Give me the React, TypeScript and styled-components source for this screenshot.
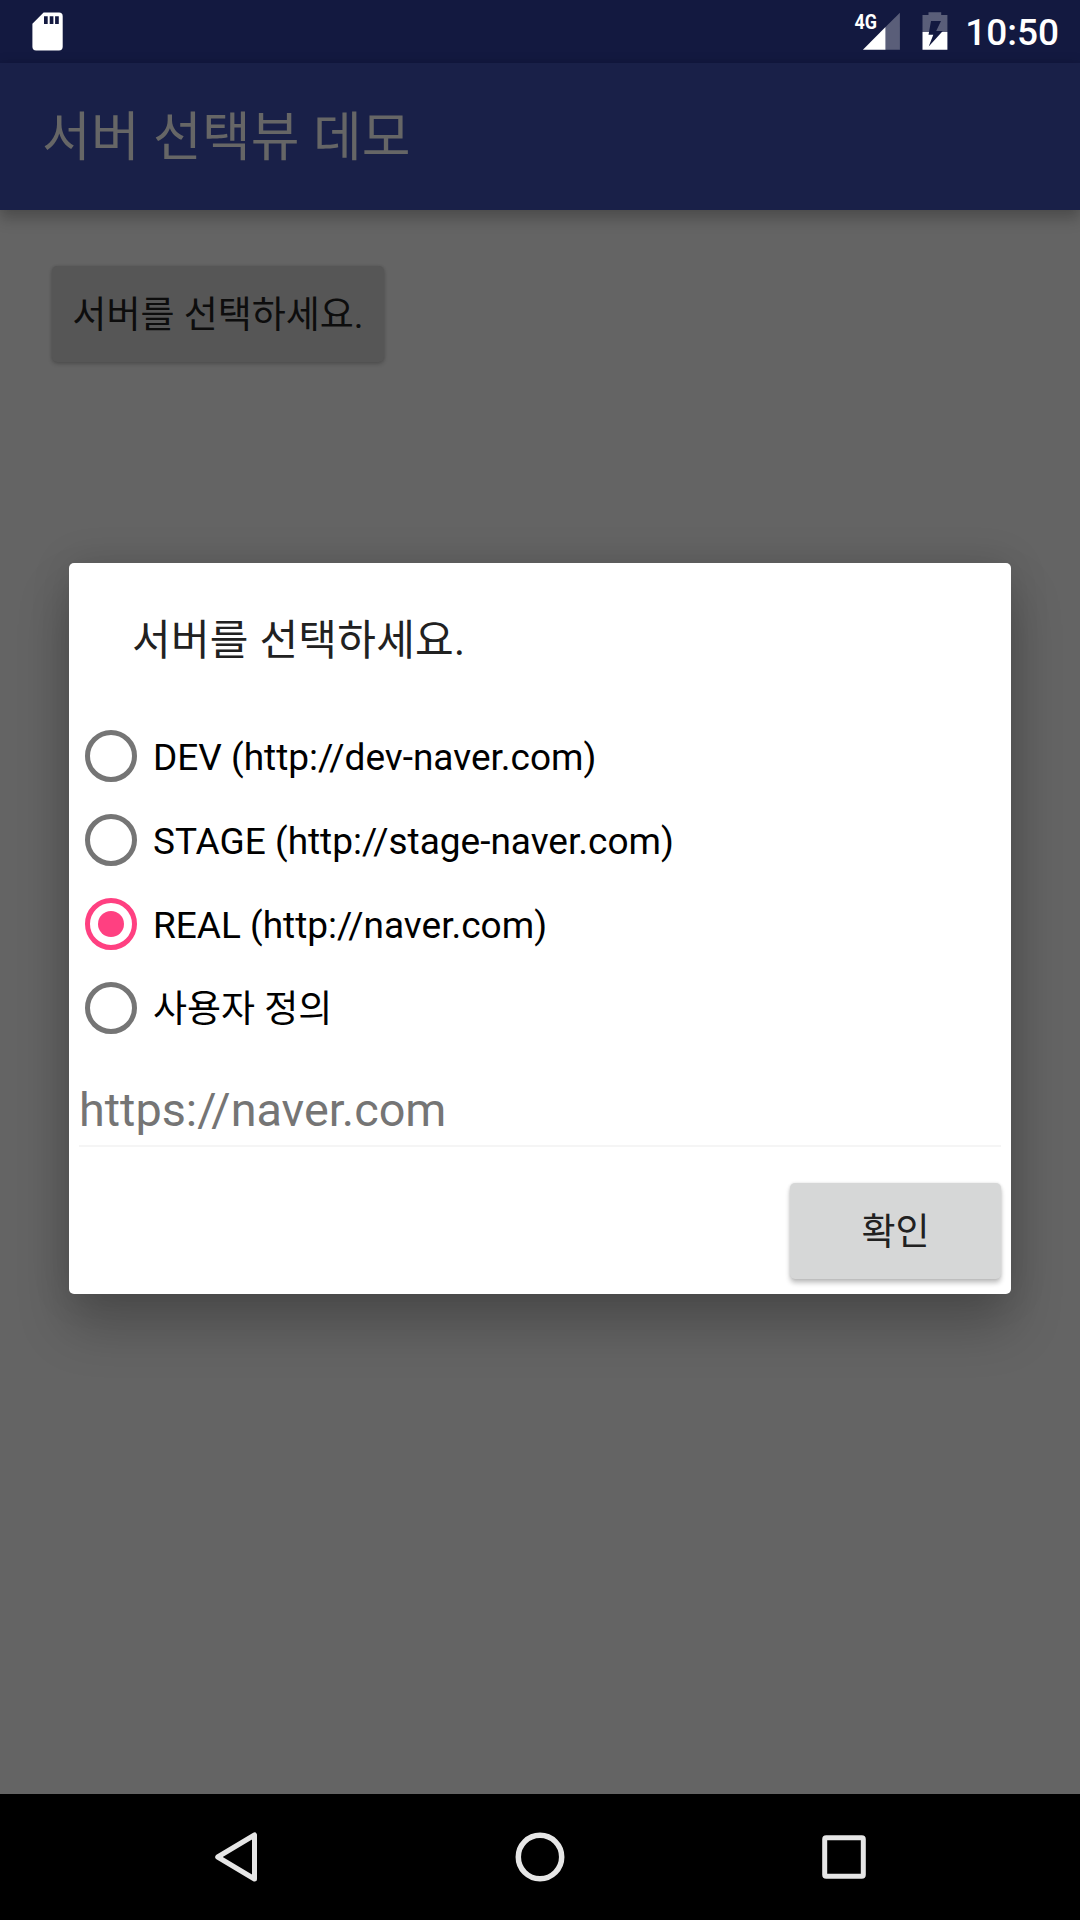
import React, { useState } from 'react';
import styled, { createGlobalStyle } from 'styled-components';

const GlobalStyle = createGlobalStyle`
  *, *::before, *::after { box-sizing: border-box; }
  body { margin: 0; background: #646464; }
  button, input { font: inherit; border: 0; outline: 0; }
`;

const Screen = styled.div`
  position: relative;
  display: flex;
  flex-direction: column;
  width: 1080px;
  height: 1920px;
  overflow: hidden;
  background: #646464;
  font-family: Roboto, 'Noto Sans CJK KR', sans-serif;
`;

const StatusBar = styled.header`
  display: flex;
  flex: none;
  height: 63px;
  align-items: flex-start;
  justify-content: space-between;
  padding: 0 21px 0 32px;
  background: #131940;
  color: #fff;
`;

const StatusIcons = styled.div`
  display: flex;
  align-items: flex-start;
`;

const Icon = styled.svg`
  display: block;
  flex: none;
`;

const Clock = styled.time`
  margin-left: 17.5px;
  padding-top: 3px;
  font-size: 37px;
  font-weight: 500;
  line-height: 60px;
  height: 63px;
`;

const AppBar = styled.div`
  display: flex;
  flex: none;
  height: 147px;
  align-items: center;
  padding: 2px 0 0 42px;
  background: #192048;
  box-shadow: 0 10px 13px rgba(0, 0, 0, 0.18), 0 0 12px rgba(0, 0, 0, 0.12);
`;

const AppTitle = styled.h1`
  margin: 0;
  color: #666;
  font-size: 53px;
  font-weight: 400;
  letter-spacing: 0.12px;
  line-height: 70px;
`;

const Content = styled.main`
  flex: 1;
  padding: 56px 52px;
`;

const RaisedButton = styled.button<{ $width: number; $dimmed?: boolean }>`
  width: ${(p) => p.$width}px;
  height: 96px;
  padding: 4px 0 0;
  border-radius: 5px;
  background: ${(p) => (p.$dimmed ? '#565656' : '#d6d7d7')};
  color: ${(p) => (p.$dimmed ? '#0d0d0d' : '#212121')};
  box-shadow: ${(p) =>
    p.$dimmed
      ? '0 2px 4px rgba(0, 0, 0, 0.2), 0 0 3px rgba(0, 0, 0, 0.1)'
      : '0 4px 5px rgba(0, 0, 0, 0.24), 0 0 3px rgba(0, 0, 0, 0.12)'};
  font-size: 37px;
  line-height: 54px;
  white-space: nowrap;
`;

const DialogLayer = styled.div`
  position: absolute;
  inset: 63px 0 126px;
  display: flex;
  align-items: center;
  justify-content: center;
`;

const Dialog = styled.section`
  display: flex;
  flex-direction: column;
  width: 942px;
  height: 731px;
  padding: 0 10px 15px;
  border-radius: 5px;
  background: #fff;
  box-shadow: 0 32px 52px rgba(0, 0, 0, 0.23), 0 0 40px rgba(0, 0, 0, 0.12);
`;

const DialogTitle = styled.h2`
  margin: 0;
  padding: 48px 0 0 53px;
  height: 151px;
  color: #212121;
  font-size: 42px;
  font-weight: 400;
  letter-spacing: 0.27px;
  line-height: 60px;
`;

const Option = styled.button`
  display: flex;
  align-items: center;
  height: 84px;
  padding: 0 0 0 6px;
  background: transparent;
  color: #000;
  font-size: 37px;
  line-height: 50px;
  text-align: left;
`;

const OptionLabel = styled.span`
  padding-top: 4px;
`;

const Radio = styled.span<{ $checked: boolean }>`
  display: grid;
  flex: none;
  place-items: center;
  width: 52px;
  height: 52px;
  margin-right: 16px;
  border: 5px solid ${(p) => (p.$checked ? '#ff4081' : '#757575')};
  border-radius: 50%;

  &::after {
    content: '';
    width: 26px;
    height: 26px;
    border-radius: 50%;
    background: ${(p) => (p.$checked ? '#ff4081' : 'transparent')};
  }
`;

const UrlInput = styled.input`
  width: 922px;
  height: 77px;
  margin-top: 20px;
  padding: 4px 0 0;
  border-bottom: 2px solid #f5f5f5;
  background: transparent;
  font-size: 46.8px;
  line-height: 60px;

  &::placeholder {
    color: #757575;
    opacity: 1;
  }
`;

const DialogActions = styled.div`
  display: flex;
  justify-content: flex-end;
  margin-top: auto;
`;

const NavBar = styled.nav`
  display: flex;
  flex: 0 0 126px;
  align-items: center;
  justify-content: center;
  background: #000;
`;

const NavButton = styled.button`
  display: grid;
  place-items: center;
  width: 304px;
  height: 126px;
  padding: 0;
  background: transparent;
`;

const SdCardIcon = () => (
  <Icon width="31" height="63" viewBox="32 0 31 63">
    <path
      fill="#fff"
      fillRule="evenodd"
      d="M43.6 12.5H59a3.7 3.7 0 0 1 3.7 3.7v30.6a3.7 3.7 0 0 1-3.7 3.7H36.1a3.7 3.7 0 0 1-3.7-3.7V23.8ZM44 16.3v7.7h3.7v-7.7ZM49.7 16.3v7.7h3.7v-7.7ZM55.1 16.3v7.7h3.7v-7.7Z"
    />
  </Icon>
);

const SignalIcon = () => (
  <Icon width="48" height="63" viewBox="854.5 0 48 63">
    <path fill="#fff" fillOpacity=".3" d="M900.4 12.700V49.700H886V27.100Z" />
    <path fill="#fff" d="M886 27.100V49.700H863.400Z" />
    <text
      x="855"
      y="28.800"
      fill="#fff"
      fontSize="21"
      fontWeight="700"
      textLength="22.500"
      lengthAdjust="spacingAndGlyphs"
    >
      4G
    </text>
  </Icon>
);

const BatteryIcon = styled(Icon)`
  margin-left: 19.5px;
`;

const Battery = () => (
  <BatteryIcon width="26" height="63" viewBox="921.5 0 26 63">
    <defs>
      <linearGradient id="charge" gradientUnits="userSpaceOnUse" x1="0" y1="12" x2="0" y2="50">
        <stop offset="0.530" stopColor="#fff" stopOpacity="0.300" />
        <stop offset="0.530" stopColor="#fff" />
      </linearGradient>
    </defs>
    <path
      fill="url(#charge)"
      fillRule="evenodd"
      d="M922 15h6v-2.700h12.700V15h6.200v34.800H922ZM930.500 21 928 34.700h4.800L928.200 46.500 942.300 31h-6.600l4.800-10Z"
    />
  </BatteryIcon>
);

const servers = [
  'DEV (http://dev-naver.com)',
  'STAGE (http://stage-naver.com)',
  'REAL (http://naver.com)',
  '사용자 정의',
];

export default function App() {
  const [selected, setSelected] = useState(2);

  return (
    <>
      <GlobalStyle />
      <Screen>
        <StatusBar>
          <SdCardIcon />
          <StatusIcons>
            <SignalIcon />
            <Battery />
            <Clock>10:50</Clock>
          </StatusIcons>
        </StatusBar>
        <AppBar>
          <AppTitle>서버 선택뷰 데모</AppTitle>
        </AppBar>
        <Content>
          <RaisedButton $width={332} $dimmed>
            서버를 선택하세요.
          </RaisedButton>
        </Content>
        <NavBar>
          <NavButton aria-label="back">
            <Icon width="50" height="54" viewBox="211 1830 50 54">
              <path
                d="M254.500 1835v44L217.700 1857Z"
                fill="none"
                stroke="#e6e6e6"
                strokeWidth="5"
                strokeLinejoin="round"
              />
            </Icon>
          </NavButton>
          <NavButton aria-label="home">
            <Icon width="54" height="54" viewBox="0 0 54 54">
              <circle cx="27" cy="27" r="21.700" fill="none" stroke="#e6e6e6" strokeWidth="5.500" />
            </Icon>
          </NavButton>
          <NavButton aria-label="recent">
            <Icon width="50" height="50" viewBox="0 0 50 50">
              <rect
                x="5.700"
                y="5.700"
                width="38.600"
                height="38.600"
                rx="1.500"
                fill="none"
                stroke="#e6e6e6"
                strokeWidth="5"
              />
            </Icon>
          </NavButton>
        </NavBar>
        <DialogLayer>
          <Dialog role="dialog">
            <DialogTitle>서버를 선택하세요.</DialogTitle>
            {servers.map((label, i) => (
              <Option key={label} onClick={() => setSelected(i)}>
                <Radio $checked={i === selected} />
                <OptionLabel>{label}</OptionLabel>
              </Option>
            ))}
            <UrlInput placeholder="https://naver.com" />
            <DialogActions>
              <RaisedButton $width={211}>확인</RaisedButton>
            </DialogActions>
          </Dialog>
        </DialogLayer>
      </Screen>
    </>
  );
}
